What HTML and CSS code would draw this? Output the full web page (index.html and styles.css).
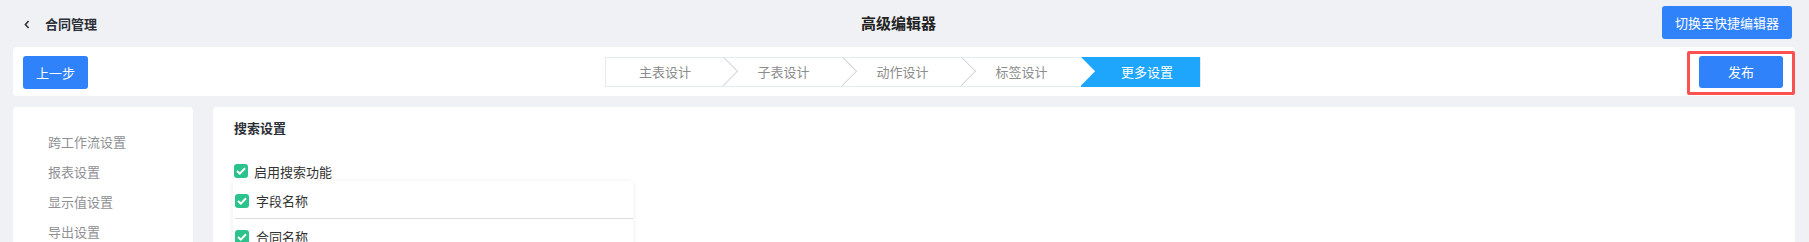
FILE: index.html
```html
<!DOCTYPE html>
<html lang="zh-CN">
<head>
<meta charset="utf-8">
<title>高级编辑器</title>
<link rel="stylesheet" href="styles.css">
</head>
<body>
<div class="header">
  <div class="back">
    <svg class="back-icon" width="6" height="9" viewBox="0 0 6 9"><path d="M4.6 1 L1.4 4.5 L4.6 8" fill="none" stroke="#333" stroke-width="1.6"/></svg>
    <span class="back-text">合同管理</span>
  </div>
  <div class="title">高级编辑器</div>
  <div class="header-right"><button class="btn btn-switch">切换至快捷编辑器</button></div>
</div>

<div class="toolbar">
  <div class="tb-left"><button class="btn btn-prev">上一步</button></div>
  <div class="steps">
    <div class="step">主表设计</div>
    <div class="step">子表设计</div>
    <div class="step">动作设计</div>
    <div class="step">标签设计</div>
    <div class="step step-active">更多设置</div>
  </div>
  <div class="tb-right">
    <div class="highlight"><button class="btn btn-publish">发布</button></div>
  </div>
</div>

<div class="content">
  <div class="sidebar">
    <div class="side-item">跨工作流设置</div>
    <div class="side-item">报表设置</div>
    <div class="side-item">显示值设置</div>
    <div class="side-item">导出设置</div>
  </div>
  <div class="main">
    <div class="section-title">搜索设置</div>
    <label class="check-row">
      <span class="checkbox"><svg width="10" height="8" viewBox="0 0 10 8"><path d="M1 4 L3.8 6.6 L9 1.2" fill="none" stroke="#fff" stroke-width="2"/></svg></span>
      <span class="check-text">启用搜索功能</span>
    </label>
    <div class="panel">
      <label class="panel-row">
        <span class="checkbox"><svg width="10" height="8" viewBox="0 0 10 8"><path d="M1 4 L3.8 6.6 L9 1.2" fill="none" stroke="#fff" stroke-width="2"/></svg></span>
        <span class="check-text">字段名称</span>
      </label>
      <label class="panel-row">
        <span class="checkbox"><svg width="10" height="8" viewBox="0 0 10 8"><path d="M1 4 L3.8 6.6 L9 1.2" fill="none" stroke="#fff" stroke-width="2"/></svg></span>
        <span class="check-text">合同名称</span>
      </label>
    </div>
  </div>
</div>
</body>
</html>
```

FILE: styles.css
```css
* { box-sizing: border-box; }
html, body { margin: 0; padding: 0; }
body {
  width: 1809px;
  height: 242px;
  overflow: hidden;
  background: #f0f1f4;
  font-family: "Noto Sans CJK SC", "Noto Sans", sans-serif;
  font-size: 13px;
  color: #333;
}
.btn {
  border: 0;
  border-radius: 3px;
  background: #3082fa;
  color: #fff;
  font-family: inherit;
  cursor: pointer;
  padding: 0;
}

/* header */
.header {
  height: 47px;
  display: grid;
  grid-template-columns: 1fr auto 1fr;
  align-items: center;
  padding: 0 16px;
}
.back { display: flex; align-items: center; padding-left: 8px; }
.back-icon { display: block; margin-top: 1px; }
.back-text {
  margin-left: 15px;
  font-size: 13px;
  font-weight: 700;
  color: #2b2f36;
}
.title {
  font-size: 15px;
  font-weight: 700;
  color: #222;
  margin-right: 12px;
  margin-top: -3px;
}
.header-right { display: flex; justify-content: flex-end; }
.btn-switch {
  width: 130px;
  height: 33px;
  font-size: 13px;
  margin-top: -2px;
  margin-right: 1px;
}

/* toolbar */
.toolbar {
  margin: 0 14px 0 13px;
  height: 49px;
  background: #fff;
  border-radius: 4px;
  display: grid;
  grid-template-columns: 1fr auto 1fr;
  align-items: center;
}
.btn-prev {
  width: 65px;
  height: 33px;
  font-size: 13px;
  margin-top: 2px;
  margin-left: 10px;
}
.steps {
  display: flex;
  border: 1px solid #e5ebf3;
  height: 30px;
  margin-left: -2px;
}
.step {
  position: relative;
  width: 119px;
  height: 28px;
  line-height: 28px;
  text-align: center;
  color: #8c8c8c;
  font-size: 13px;
  background: #fff;
}
.step:first-child { width: 118px; }
.step:not(.step-active)::after {
  content: "";
  position: absolute;
  z-index: 1;
  top: 3px;
  right: -10px;
  width: 20px;
  height: 20px;
  background: #fff;
  border-top: 1px solid #d3d6dc;
  border-right: 1px solid #d3d6dc;
  transform: rotate(45deg) scaleX(0.97);
}
.step:nth-child(4)::after { border-color: transparent; }
.step-active {
  background: #1ea6fc;
  color: #fff;
  margin: -1px 0;
  height: 30px;
  line-height: 30px;
  padding-left: 13px;
}
.tb-right { display: flex; justify-content: flex-end; }
.highlight {
  border: 3px solid #fb5151;
  border-radius: 2px;
  padding: 2px 9px 4px 9px;
  margin-top: 2px;
}
.btn-publish {
  display: block;
  width: 84px;
  height: 32px;
  font-size: 13px;
}

/* content */
.content {
  display: flex;
  gap: 20px;
  margin-top: 11px;
  padding: 0 14px 0 13px;
  height: 200px;
}
.sidebar {
  width: 180px;
  background: #fff;
  border-radius: 4px 4px 0 0;
  padding: 20px 0 0 35px;
}
.side-item {
  line-height: 30px;
  color: #8f9094;
  font-size: 13px;
}
.main {
  flex: 1;
  background: #fff;
  border-radius: 4px 4px 0 0;
  padding: 11px 0 0 21px;
}
.section-title {
  line-height: 20px;
  font-weight: 700;
  color: #2b2f36;
  font-size: 13px;
}
.check-row {
  display: flex;
  align-items: center;
  height: 20px;
  margin-top: 23px;
}
.checkbox {
  width: 14px;
  height: 14px;
  border-radius: 3px;
  background: #2ac38b;
  display: flex;
  align-items: center;
  justify-content: center;
  flex: none;
}
.check-text { margin-left: 6px; color: #333; }
.panel {
  width: 400px;
  margin: 0 0 0 -1px;
  padding-top: 2px;
  background: #fff;
  box-shadow: 0 1px 6px rgba(0, 0, 0, 0.08);
  height: 80px;
}
.panel-row {
  display: flex;
  align-items: center;
  height: 36px;
  margin-left: 2px;
  border-bottom: 1px solid #dcdde3;
}
.panel-row .check-text { margin-left: 7px; }
```
